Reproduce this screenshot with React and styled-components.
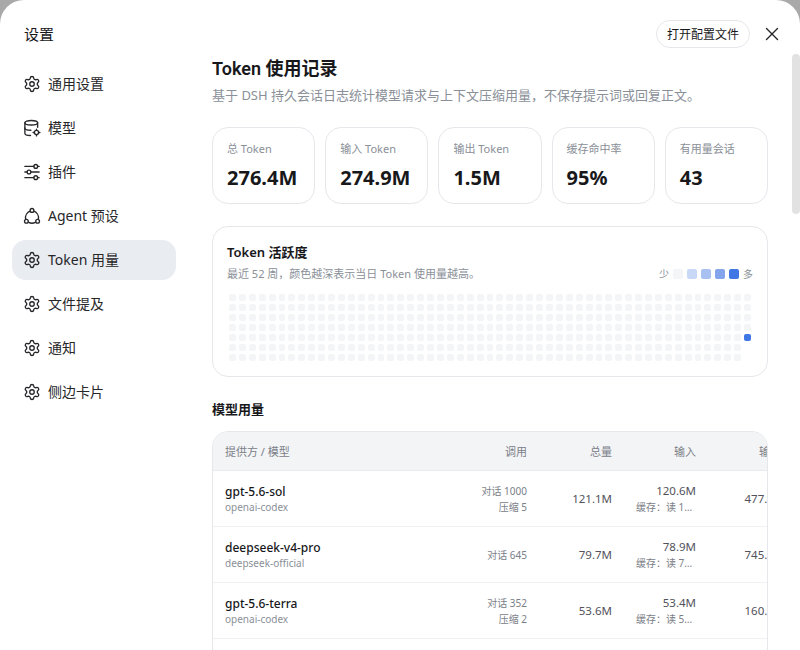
import React from "react";
import styled, { createGlobalStyle } from "styled-components";
import { Settings, X } from "lucide-react";

const GlobalStyle = createGlobalStyle`
  html, body {
    margin: 0;
    height: 650px;
    overflow: hidden;
    background: #a9a9a9;
  }
  * {
    box-sizing: border-box;
  }
`;

const Dialog = styled.div`
  position: relative;
  width: 800px;
  height: 650px;
  display: flex;
  overflow: hidden;
  background: #fff;
  border-radius: 24px 24px 0 0;
  color: #18181b;
  font-family: "Noto Sans", "Noto Sans CJK SC", sans-serif;
`;

const Sidebar = styled.aside`
  width: 188px;
  flex-shrink: 0;
  padding: 24px 12px 0;
`;

const SideTitle = styled.div`
  font-size: 15px;
  line-height: 20px;
  padding-left: 12px;
  margin-bottom: 20px;
`;

const Nav = styled.nav`
  display: flex;
  flex-direction: column;
  gap: 4px;
`;

const NavItem = styled.div`
  height: 40px;
  display: flex;
  align-items: center;
  gap: 8px;
  padding: 0 12px;
  border-radius: 14px;
  font-size: 14px;
  color: #27272a;
  background: ${(props) => (props.$active ? "#e9ecf1" : "transparent")};
  svg {
    flex-shrink: 0;
    margin: 0 -1px;
  }
`;

const NavLabel = styled.span`
  margin-top: -2px;
`;

const Main = styled.main`
  flex: 1;
  min-width: 0;
  display: flex;
  flex-direction: column;
  padding: 0 32px 0 24px;
`;

const TopBar = styled.div`
  height: 20px;
  margin-top: 20px;
  display: flex;
  justify-content: flex-end;
  align-items: flex-start;
  gap: 11px;
  margin-right: -15px;
  flex-shrink: 0;
`;

const OpenButton = styled.button`
  height: 28px;
  width: 94px;
  padding: 0;
  background: #fff;
  border: 1px solid #e5e7eb;
  border-radius: 14px;
  font: inherit;
  font-size: 12px;
  color: #18181b;
`;

const CloseButton = styled.button`
  width: 22px;
  height: 28px;
  padding: 0;
  border: 0;
  background: none;
  display: flex;
  align-items: center;
  justify-content: center;
  color: #27272a;
`;

const Title = styled.h1`
  margin: 16px 0 0;
  font-family: Roboto, "Noto Sans CJK SC", sans-serif;
  font-size: 18px;
  line-height: 26px;
  font-weight: 600;
`;

const Subtitle = styled.p`
  margin: 3px 0 0;
  font-size: 13px;
  line-height: 20px;
  color: #8a8f98;
`;

const Stats = styled.div`
  margin-top: 22px;
  display: grid;
  grid-template-columns: repeat(5, 1fr);
  gap: 10px;
`;

const StatCard = styled.div`
  height: 77px;
  padding: 13px 14px 0;
  border: 1px solid #e5e7eb;
  border-radius: 16px;
`;

const StatLabel = styled.div`
  font-size: 11px;
  line-height: 16px;
  color: #8a8f98;
`;

const StatValue = styled.div`
  margin-top: 8px;
  font-size: 20px;
  line-height: 26px;
  font-weight: 700;
`;

const Panel = styled.section`
  margin-top: 22px;
  height: 151px;
  padding: 15px 14px 0;
  border: 1px solid #e5e7eb;
  border-radius: 16px;
`;

const PanelHead = styled.div`
  display: flex;
  justify-content: space-between;
  align-items: flex-end;
`;

const PanelTitle = styled.h2`
  margin: 0;
  font-size: 13px;
  line-height: 20px;
  font-weight: 600;
`;

const PanelNote = styled.p`
  margin: 4px 0 0;
  font-size: 11px;
  line-height: 16px;
  color: #8a8f98;
`;

const Legend = styled.div`
  display: flex;
  align-items: center;
  gap: 4px;
  font-size: 10px;
  line-height: 16px;
  color: #8a8f98;
`;

const Swatch = styled.span`
  width: 10px;
  height: 10px;
  border-radius: 2px;
  background: ${(props) => props.$color};
`;

const HeatGrid = styled.div`
  margin: 12px 2px 0;
  display: grid;
  grid-template-rows: repeat(7, 7px);
  grid-template-columns: repeat(53, 1fr);
  grid-auto-flow: column;
  gap: 3px;
`;

const HeatCell = styled.span`
  border-radius: 2px;
  background: ${(props) => props.$color};
`;

const SectionTitle = styled.h2`
  margin: 22px 0 0;
  font-size: 13px;
  line-height: 20px;
  font-weight: 600;
`;

const Table = styled.div`
  flex: 1;
  min-height: 0;
  margin: 12px 0 -2px;
  border: 1px solid #e5e7eb;
  border-radius: 16px 16px 0 0;
  overflow: hidden;
`;

const Row = styled.div`
  display: grid;
  grid-template-columns: 241px 85px 85px 84px 85px;
  width: 580px;
  height: 56px;
  align-items: center;
  border-bottom: 1px solid #f0f1f3;
`;

const HeadRow = styled(Row)`
  height: 39px;
  background: #f3f4f6;
  border-bottom: 1px solid #e9eaed;
  font-size: 11px;
  color: #7b8088;
`;

const Cell = styled.div`
  padding: 0 12px;
  text-align: ${(props) => (props.$left ? "left" : "right")};
  white-space: nowrap;
`;

const ModelName = styled.div`
  font-size: 12px;
  line-height: 17px;
  font-weight: 500;
`;

const Provider = styled.div`
  font-size: 10px;
  line-height: 14px;
  color: #8a8f98;
`;

const Calls = styled.div`
  font-size: 10px;
  line-height: 16px;
  color: #7b8088;
`;

const Amount = styled.div`
  font-size: 11.5px;
  line-height: 16px;
  color: #52525b;
`;

const CacheNote = styled.div`
  margin: 1px 0 0 auto;
  width: 60px;
  text-align: left;
  overflow: hidden;
  text-overflow: ellipsis;
  font-size: 10px;
  line-height: 15px;
  color: #7b8088;
`;

const ScrollThumb = styled.div`
  position: absolute;
  top: 54px;
  right: 0;
  width: 8px;
  height: 160px;
  border-radius: 4px;
  background: #e2e2e2;
`;

const Icon = ({ children }) => (
  <svg width="18" height="18" viewBox="0 0 24 24" fill="none" stroke="currentColor" strokeWidth="1.8" strokeLinecap="round" strokeLinejoin="round">
    {children}
  </svg>
);

const GearIcon = () => <Settings size={18} strokeWidth={1.8} />;

const DatabaseIcon = () => (
  <Icon>
    <ellipse cx="11" cy="5" rx="8.5" ry="3" />
    <path d="M2.5 5v14c0 1.6 3 3 7.5 3" />
    <path d="M19.5 5v6" />
    <path d="M2.5 12c0 1.6 3 3 8 3" />
    <circle cx="18" cy="18" r="2.8" />
    <path d="M18 13.5v1.5M18 21v1.5M13.5 18H15M21 18h1.5" />
  </Icon>
);

const SliderIcon = () => (
  <Icon>
    <path d="M2.5 4.5h12M19.5 4.5h2M2.5 12h3M10.5 12h11M2.5 19.5h12M19.5 19.5h2" />
    <circle cx="17" cy="4.5" r="2.5" />
    <circle cx="8" cy="12" r="2.5" />
    <circle cx="17" cy="19.5" r="2.5" />
  </Icon>
);

const AgentIcon = () => (
  <Icon>
    <circle cx="12" cy="4.5" r="2.5" />
    <circle cx="4.5" cy="19" r="2.5" />
    <circle cx="19.5" cy="19" r="2.5" />
    <path d="M9.5 5.5A9.5 9.5 0 0 0 3.5 16M14.5 5.5A9.5 9.5 0 0 1 20.5 16M7.5 20.5a10 10 0 0 0 9 0" />
  </Icon>
);

const navItems = [
  { label: "通用设置", icon: <GearIcon /> },
  { label: "模型", icon: <DatabaseIcon /> },
  { label: "插件", icon: <SliderIcon /> },
  { label: "Agent 预设", icon: <AgentIcon /> },
  { label: "Token 用量", icon: <GearIcon />, active: true },
  { label: "文件提及", icon: <GearIcon /> },
  { label: "通知", icon: <GearIcon /> },
  { label: "侧边卡片", icon: <GearIcon /> },
];

const stats = [
  { label: "总 Token", value: "276.4M" },
  { label: "输入 Token", value: "274.9M" },
  { label: "输出 Token", value: "1.5M" },
  { label: "缓存命中率", value: "95%" },
  { label: "有用量会话", value: "43" },
];

const legend = ["#f4f5f7", "#c9d8f6", "#a9c1f1", "#84a5ec", "#3f78e4"];

const models = [
  { name: "gpt-5.6-sol", provider: "openai-codex", calls: ["对话 1000", "压缩 5"], total: "121.1M", input: "120.6M", cache: "缓存：读 119.2M", output: "477.5K" },
  { name: "deepseek-v4-pro", provider: "deepseek-official", calls: ["对话 645"], total: "79.7M", input: "78.9M", cache: "缓存：读 76.4M", output: "745.3K" },
  { name: "gpt-5.6-terra", provider: "openai-codex", calls: ["对话 352", "压缩 2"], total: "53.6M", input: "53.4M", cache: "缓存：读 51.8M", output: "160.2K" },
];

const App = () => (
  <Dialog>
    <GlobalStyle />
    <Sidebar>
      <SideTitle>设置</SideTitle>
      <Nav>
        {navItems.map((item) => (
          <NavItem key={item.label} $active={item.active}>
            {item.icon}
            <NavLabel>{item.label}</NavLabel>
          </NavItem>
        ))}
      </Nav>
    </Sidebar>
    <Main>
      <TopBar>
        <OpenButton>打开配置文件</OpenButton>
        <CloseButton>
          <X size={22} strokeWidth={1.5} />
        </CloseButton>
      </TopBar>
      <Title>Token 使用记录</Title>
      <Subtitle>基于 DSH 持久会话日志统计模型请求与上下文压缩用量，不保存提示词或回复正文。</Subtitle>
      <Stats>
        {stats.map((stat) => (
          <StatCard key={stat.label}>
            <StatLabel>{stat.label}</StatLabel>
            <StatValue>{stat.value}</StatValue>
          </StatCard>
        ))}
      </Stats>
      <Panel>
        <PanelHead>
          <div>
            <PanelTitle>Token 活跃度</PanelTitle>
            <PanelNote>最近 52 周，颜色越深表示当日 Token 使用量越高。</PanelNote>
          </div>
          <Legend>
            少
            {legend.map((color) => (
              <Swatch key={color} $color={color} />
            ))}
            多
          </Legend>
        </PanelHead>
        <HeatGrid>
          {Array.from({ length: 369 }, (_, i) => (
            <HeatCell key={i} $color={i === 368 ? "#3f78e4" : "#f4f5f7"} />
          ))}
        </HeatGrid>
      </Panel>
      <SectionTitle>模型用量</SectionTitle>
      <Table>
        <HeadRow>
          <Cell $left>提供方 / 模型</Cell>
          <Cell>调用</Cell>
          <Cell>总量</Cell>
          <Cell>输入</Cell>
          <Cell>输出</Cell>
        </HeadRow>
        {models.map((model) => (
          <Row key={model.name}>
            <Cell $left>
              <ModelName>{model.name}</ModelName>
              <Provider>{model.provider}</Provider>
            </Cell>
            <Cell>
              {model.calls.map((line) => (
                <Calls key={line}>{line}</Calls>
              ))}
            </Cell>
            <Cell>
              <Amount>{model.total}</Amount>
            </Cell>
            <Cell>
              <Amount>{model.input}</Amount>
              <CacheNote>{model.cache}</CacheNote>
            </Cell>
            <Cell>
              <Amount>{model.output}</Amount>
            </Cell>
          </Row>
        ))}
      </Table>
    </Main>
    <ScrollThumb />
  </Dialog>
);

export default App;
